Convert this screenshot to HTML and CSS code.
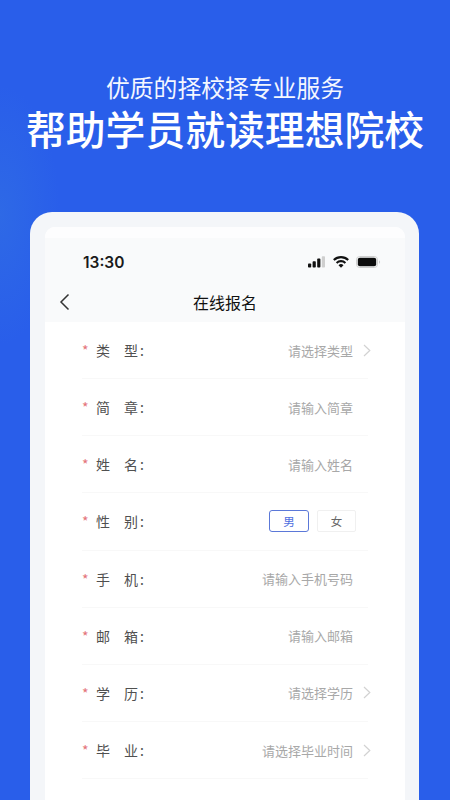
FILE: index.html
```html
<!DOCTYPE html>
<html lang="zh-CN">
<head>
    <meta charset="UTF-8">
    <meta name="viewport" content="width=device-width, initial-scale=1.0">
    <title>在线报名</title>
    <link rel="stylesheet" href="styles.css">
</head>
<body>

<header class="hero">
    <p class="hero-sub">优质的择校择专业服务</p>
    <h1 class="hero-title">帮助学员就读理想院校</h1>
</header>

<main class="frame">
    <div class="screen">
        <div class="top-area">
            <div class="status-bar">
                <span class="time">13:30</span>
                <div class="status-icons">
                    <svg width="18" height="12" viewBox="0 0 18 12">
                        <rect x="0" y="7.5" width="3.2" height="4" rx="0.8" fill="#111"/>
                        <rect x="4.6" y="5.2" width="3.2" height="6.3" rx="0.8" fill="#111"/>
                        <rect x="9.2" y="2.6" width="3.2" height="8.9" rx="0.8" fill="#111"/>
                        <rect x="13.8" y="0.3" width="3.2" height="11.2" rx="0.8" fill="#cfcfcf"/>
                    </svg>
                    <svg width="16" height="12" viewBox="0 0 16 12">
                        <path d="M0.8 4 A10.4 10.4 0 0 1 15.2 4" fill="none" stroke="#111" stroke-width="2.1"/>
                        <path d="M3.6 6.9 A6.3 6.3 0 0 1 12.4 6.9" fill="none" stroke="#111" stroke-width="2.1"/>
                        <path d="M8 11.8 L5.5 9.2 A3.5 3.5 0 0 1 10.5 9.2 Z" fill="#111"/>
                    </svg>
                    <svg width="25" height="12" viewBox="0 0 25 12">
                        <rect x="0.5" y="0.5" width="21" height="11" rx="3.2" fill="none" stroke="#cfcfcf"/>
                        <rect x="1.8" y="1.8" width="18.4" height="8.4" rx="2" fill="#0c0c0c"/>
                        <path d="M23 4.2 A2 2 0 0 1 23 7.8 Z" fill="#cfcfcf"/>
                    </svg>
                </div>
            </div>
            <div class="nav-bar">
                <svg class="back" width="11" height="18" viewBox="0 0 11 18">
                    <path d="M9.5 1.5 L2 9 L9.5 16.5" fill="none" stroke="#333" stroke-width="1.5"/>
                </svg>
                <span class="nav-title">在线报名</span>
            </div>
        </div>

        <form class="form">
            <div class="row">
                <span class="label"><i class="star">*</i>类　型<b class="colon">:</b></span>
                <span class="value">请选择类型</span>
                <svg class="arrow" width="8" height="13" viewBox="0 0 8 13"><path d="M1 1 L6.8 6.5 L1 12" fill="none" stroke="#d2d2d2" stroke-width="1.2"/></svg>
            </div>
            <div class="row">
                <span class="label"><i class="star">*</i>简　章<b class="colon">:</b></span>
                <span class="value">请输入简章</span>
            </div>
            <div class="row">
                <span class="label"><i class="star">*</i>姓　名<b class="colon">:</b></span>
                <span class="value">请输入姓名</span>
            </div>
            <div class="row">
                <span class="label"><i class="star">*</i>性　别<b class="colon">:</b></span>
                <div class="gender">
                    <span class="gender-btn active">男</span>
                    <span class="gender-btn">女</span>
                </div>
            </div>
            <div class="row">
                <span class="label"><i class="star">*</i>手　机<b class="colon">:</b></span>
                <span class="value">请输入手机号码</span>
            </div>
            <div class="row">
                <span class="label"><i class="star">*</i>邮　箱<b class="colon">:</b></span>
                <span class="value">请输入邮箱</span>
            </div>
            <div class="row">
                <span class="label"><i class="star">*</i>学　历<b class="colon">:</b></span>
                <span class="value">请选择学历</span>
                <svg class="arrow" width="8" height="13" viewBox="0 0 8 13"><path d="M1 1 L6.8 6.5 L1 12" fill="none" stroke="#d2d2d2" stroke-width="1.2"/></svg>
            </div>
            <div class="row">
                <span class="label"><i class="star">*</i>毕　业<b class="colon">:</b></span>
                <span class="value">请选择毕业时间</span>
                <svg class="arrow" width="8" height="13" viewBox="0 0 8 13"><path d="M1 1 L6.8 6.5 L1 12" fill="none" stroke="#d2d2d2" stroke-width="1.2"/></svg>
            </div>
        </form>
    </div>
</main>

</body>
</html>
```

FILE: styles.css
```css
* {
    box-sizing: border-box;
}
html, body {
    height: 100%;
}
body {
    margin: 0;
    overflow: hidden;
    font-family: "Noto Sans CJK SC", "Liberation Sans", sans-serif;
    background: radial-gradient(ellipse 60px 130px at 0 215px, #2e69e6 0%, rgba(46, 105, 230, 0) 100%), #295eea;
}
.hero {
    height: 212px;
    padding-top: 72px;
    text-align: center;
    color: #fff;
}
.hero-sub {
    margin: 0;
    font-size: 23.8px;
    line-height: 30px;
    font-weight: 400;
    color: #f4f7ff;
}
.hero-title {
    margin: 4px 0 0;
    font-size: 39.8px;
    line-height: 44px;
    font-weight: 500;
}
.frame {
    width: 389px;
    height: 588px;
    margin-left: 30px;
    padding: 15px 14px 0 15px;
    background: #f4f6f9;
    border-radius: 22px 22px 0 0;
}
.screen {
    height: 100%;
    background: #fff;
    border-radius: 10px 10px 0 0;
    overflow: hidden;
}
.top-area {
    height: 95px;
    padding-top: 22px;
    background: linear-gradient(#fdfdfe 0, #fdfdfe 11px, #f9fafb 11px);
}
.status-bar {
    display: flex;
    align-items: center;
    justify-content: space-between;
    height: 26px;
    padding: 0 24px 0 38px;
}
.time {
    font-family: Inter, "Liberation Sans", sans-serif;
    font-size: 15.5px;
    font-weight: 600;
    color: #1a1a1a;
}
.status-icons {
    display: flex;
    align-items: center;
    gap: 7px;
}
.nav-bar {
    display: flex;
    align-items: center;
    justify-content: center;
    position: relative;
    height: 40px;
    margin-top: 7px;
}
.back {
    position: absolute;
    left: 14px;
    top: 11px;
}
.nav-title {
    font-size: 16px;
    font-weight: 400;
    color: #111;
}
.form {
    padding: 0 37px;
}
.row {
    display: flex;
    align-items: center;
    height: 57.15px;
    padding-right: 15px;
    border-bottom: 1px solid #f8f8f8;
}
.label {
    flex: 1;
    font-size: 14px;
    color: #505050;
}
.star {
    display: inline-block;
    width: 14px;
    font-style: normal;
    color: #e4737a;
}
.colon {
    margin-left: 2px;
    font-weight: 400;
}
.value {
    font-size: 13px;
    color: #a8a8a8;
}
.arrow {
    margin-left: 10px;
    margin-right: -18px;
}
.gender {
    display: flex;
    gap: 8px;
    margin-right: -3px;
}
.gender-btn {
    width: 39px;
    height: 22px;
    font-size: 11.5px;
    line-height: 20px;
    text-align: center;
    color: #666;
    border: 1px solid #f0f0f0;
    border-radius: 2px;
}
.gender-btn.active {
    width: 40px;
    color: #4f6fe0;
    border-color: #5b78d8;
    border-radius: 3px;
}
```
